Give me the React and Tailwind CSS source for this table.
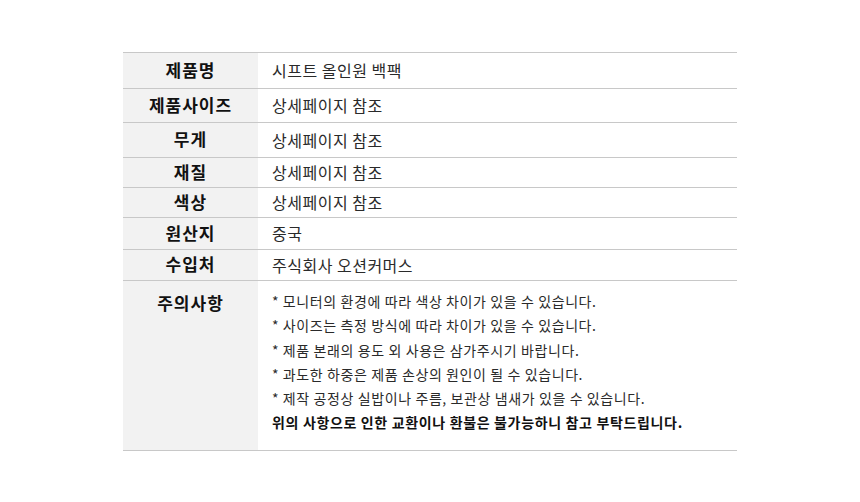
import React from 'react';

const rows = [
  { label: '제품명', value: '시프트 올인원 백팩', h: 'h-[36px]' },
  { label: '제품사이즈', value: '상세페이지 참조', h: 'h-[34px]' },
  { label: '무게', value: '상세페이지 참조', h: 'h-[35px]' },
  { label: '재질', value: '상세페이지 참조', h: 'h-[30px]' },
  { label: '색상', value: '상세페이지 참조', h: 'h-[30px]' },
  { label: '원산지', value: '중국', h: 'h-[32px]' },
  { label: '수입처', value: '주식회사 오션커머스', h: 'h-[31px]' },
];

const notes = [
  '* 모니터의 환경에 따라 색상 차이가 있을 수 있습니다.',
  '* 사이즈는 측정 방식에 따라 차이가 있을 수 있습니다.',
  '* 제품 본래의 용도 외 사용은 삼가주시기 바랍니다.',
  '* 과도한 하중은 제품 손상의 원인이 될 수 있습니다.',
  '* 제작 공정상 실밥이나 주름, 보관상 냄새가 있을 수 있습니다.',
];

export default function App() {
  return (
    <div className="w-[860px] h-[502px] bg-white pt-[52px] font-['Noto_Sans_CJK_KR',sans-serif]">
      <div className="mx-auto w-[614px] border-t border-[#c8c8c8]">
        {rows.map((r) => (
          <div key={r.label} className={`flex border-b border-[#c8c8c8] ${r.h}`}>
            <div className="w-[135px] shrink-0 bg-[#f2f2f2] flex items-center justify-center pb-[2px] text-[17px] tracking-[1px] font-bold text-[#111]">
              {r.label}
            </div>
            <div className="flex items-center pl-[14px] pb-[1px] text-[16px] tracking-[0.5px] text-[#2a2a2a]">{r.value}</div>
          </div>
        ))}
        <div className="flex border-b border-[#c8c8c8] h-[170px]">
          <div className="w-[135px] shrink-0 bg-[#f2f2f2] flex justify-center pt-[9px] text-[17px] tracking-[1px] font-bold text-[#111]">
            주의사항
          </div>
          <div className="pl-[14px] pt-[8px] text-[14px] tracking-[0.6px] text-[#2a2a2a] leading-[24.3px]">
            {notes.map((n) => (
              <div key={n}>{n}</div>
            ))}
            <div className="font-bold text-[#111] tracking-[0.65px]">위의 사항으로 인한 교환이나 환불은 불가능하니 참고 부탁드립니다.</div>
          </div>
        </div>
      </div>
    </div>
  );
}
